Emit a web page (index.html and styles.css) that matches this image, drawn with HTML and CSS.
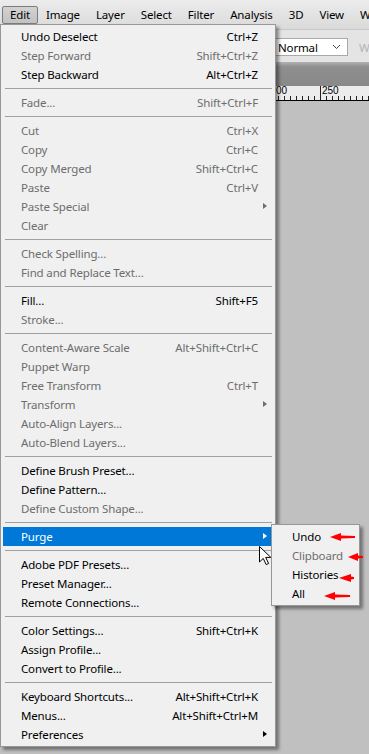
FILE: index.html
```html
<!DOCTYPE html>
<html lang="en">
<head>
    <meta charset="UTF-8">
    <meta name="viewport" content="width=device-width, initial-scale=1.0">
    <title>Edit menu</title>
    <link rel="stylesheet" href="styles.css">
</head>
<body>
    <div class="menubar">
        <span class="bar-item open">Edit</span>
        <span class="bar-item">Image</span>
        <span class="bar-item">Layer</span>
        <span class="bar-item">Select</span>
        <span class="bar-item">Filter</span>
        <span class="bar-item">Analysis</span>
        <span class="bar-item">3D</span>
        <span class="bar-item">View</span>
        <span class="bar-item">Window</span>
    </div>

    <div class="workspace">
        <div class="options-bar">
            <div class="select-box">
                <span>Normal</span>
                <svg width="9" height="6" viewBox="0 0 9 6"><path d="M1 1 L4.5 4.5 L8 1" fill="none" stroke="#444" stroke-width="1"/></svg>
            </div>
            <span class="faded">Width:</span>
        </div>
        <div class="tab-band"></div>
        <div class="ruler">
            <span class="ruler-num first">00</span>
            <span class="ruler-num major">250</span>
        </div>
        <div class="canvas"></div>
    </div>

    <!-- Edit dropdown -->
    <div class="menu">
        <div class="item"><span>Undo Deselect</span><span class="key">Ctrl+Z</span></div>
        <div class="item off"><span>Step Forward</span><span class="key">Shift+Ctrl+Z</span></div>
        <div class="item"><span>Step Backward</span><span class="key">Alt+Ctrl+Z</span></div>
        <div class="sep"></div>
        <div class="item off"><span>Fade...</span><span class="key">Shift+Ctrl+F</span></div>
        <div class="sep"></div>
        <div class="item off"><span>Cut</span><span class="key">Ctrl+X</span></div>
        <div class="item off"><span>Copy</span><span class="key">Ctrl+C</span></div>
        <div class="item off"><span>Copy Merged</span><span class="key">Shift+Ctrl+C</span></div>
        <div class="item off"><span>Paste</span><span class="key">Ctrl+V</span></div>
        <div class="item off sub"><span>Paste Special</span><span class="key"></span></div>
        <div class="item off"><span>Clear</span><span class="key"></span></div>
        <div class="sep"></div>
        <div class="item off"><span>Check Spelling...</span><span class="key"></span></div>
        <div class="item off"><span>Find and Replace Text...</span><span class="key"></span></div>
        <div class="sep"></div>
        <div class="item"><span>Fill...</span><span class="key">Shift+F5</span></div>
        <div class="item off"><span>Stroke...</span><span class="key"></span></div>
        <div class="sep"></div>
        <div class="item off"><span>Content-Aware Scale</span><span class="key">Alt+Shift+Ctrl+C</span></div>
        <div class="item off"><span>Puppet Warp</span><span class="key"></span></div>
        <div class="item off"><span>Free Transform</span><span class="key">Ctrl+T</span></div>
        <div class="item off sub"><span>Transform</span><span class="key"></span></div>
        <div class="item off"><span>Auto-Align Layers...</span><span class="key"></span></div>
        <div class="item off"><span>Auto-Blend Layers...</span><span class="key"></span></div>
        <div class="sep"></div>
        <div class="item"><span>Define Brush Preset...</span><span class="key"></span></div>
        <div class="item"><span>Define Pattern...</span><span class="key"></span></div>
        <div class="item off"><span>Define Custom Shape...</span><span class="key"></span></div>
        <div class="sep"></div>
        <div class="item sub active"><span>Purge</span><span class="key"></span></div>
        <div class="sep"></div>
        <div class="item"><span>Adobe PDF Presets...</span><span class="key"></span></div>
        <div class="item"><span>Preset Manager...</span><span class="key"></span></div>
        <div class="item"><span>Remote Connections...</span><span class="key"></span></div>
        <div class="sep"></div>
        <div class="item"><span>Color Settings...</span><span class="key">Shift+Ctrl+K</span></div>
        <div class="item"><span>Assign Profile...</span><span class="key"></span></div>
        <div class="item"><span>Convert to Profile...</span><span class="key"></span></div>
        <div class="sep"></div>
        <div class="item"><span>Keyboard Shortcuts...</span><span class="key">Alt+Shift+Ctrl+K</span></div>
        <div class="item"><span>Menus...</span><span class="key">Alt+Shift+Ctrl+M</span></div>
        <div class="item sub"><span>Preferences</span><span class="key"></span></div>
    </div>

    <!-- Purge submenu -->
    <div class="submenu">
        <div class="item">Undo</div>
        <div class="item off">Clipboard</div>
        <div class="item">Histories</div>
        <div class="item">All</div>
    </div>

    <!-- red annotation arrows and mouse pointer -->
    <svg class="overlay" width="369" height="754" viewBox="0 0 369 754">
        <g fill="#f00">
            <path d="M330 537 L341 533 L341 535.5 L355 536 L355 538 L341 538.5 L341 541 Z"/>
            <path d="M348 557 L358 553 L358 555.5 L363 556 L363 558 L358 558.5 L358 561 Z"/>
            <path d="M339 578 L351 574 L351 576.5 L354 577 L354 579 L351 579.5 L351 582 Z"/>
            <path d="M324 596 L335 592 L335 594.5 L350 595 L350 597 L335 597.5 L335 600 Z"/>
        </g>
        <path d="M259.5 546.5 L259.5 562 L263.2 558.4 L266.2 564.6 L268.6 563.5 L265.7 557.4 L270.8 557.4 Z" fill="#fff" stroke="#000" stroke-width="1"/>
    </svg>
</body>
</html>
```

FILE: styles.css
```css
body {
    margin: 0;
    width: 369px;
    height: 754px;
    overflow: hidden;
    font-family: 'Noto Sans', 'Liberation Sans', sans-serif;
    font-size: 11.5px;
    letter-spacing: -0.15px;
    color: #000;
    background-color: #c0c0c0;
    display: flex;
    flex-direction: column;
}

/* top menu bar */
.menubar {
    height: 30px;
    box-sizing: border-box;
    padding: 6px 0 0 2px;
    display: flex;
    white-space: nowrap;
    overflow: hidden;
    background: linear-gradient(#ececec, #dadada);
    border-bottom: 1px solid #c8c8c8;
}

.bar-item {
    height: 18px;
    line-height: 16px;
    padding: 0 7px;
    box-sizing: border-box;
    border: 1px solid transparent;
    flex-shrink: 0;
}

.bar-item.open {
    background: linear-gradient(#d2d2d2, #c2c2c2);
    border-color: #7c7c7c;
    border-radius: 2px;
}

/* photoshop workspace behind the menu */
.workspace {
    flex: 1;
    display: flex;
    flex-direction: column;
}

.options-bar {
    height: 32px;
    display: flex;
    align-items: center;
    gap: 11px;
    padding-left: 273px;
    background-color: #e4e4e4;
    white-space: nowrap;
    overflow: hidden;
}

.select-box {
    width: 75px;
    height: 18px;
    flex-shrink: 0;
    box-sizing: border-box;
    margin-top: 2px;
    padding: 0 6px 0 4px;
    display: flex;
    align-items: center;
    justify-content: space-between;
    background-color: #fff;
    border: 1px solid #a9a9a9;
}

.faded {
    color: #b4b4b4;
    margin-top: 2px;
}

.tab-band {
    height: 24px;
    background: linear-gradient(#b2b2b2, #8e8e8e 20%, #898989);
}

.ruler {
    height: 14px;
    position: relative;
    display: flex;
    align-items: flex-start;
    padding-left: 276px;
    font-family: 'Liberation Sans', sans-serif;
    font-size: 10px;
    line-height: 10px;
    letter-spacing: 0;
    background-color: #ececec;
    background-image: repeating-linear-gradient(90deg, #222 0 1px, transparent 1px 6px);
    background-size: 100% 4px;
    background-repeat: no-repeat;
    background-position: 2px 100%;
    border-bottom: 1px solid #000;
}

.ruler-num.first {
    width: 44px;
}

.ruler-num.major {
    border-left: 1px solid #222;
    height: 14px;
    padding-left: 1px;
}

.canvas {
    flex: 1;
    background-color: #c0c0c0;
}

/* dropdown menus */
.menu,
.submenu {
    position: absolute;
    box-sizing: border-box;
    padding: 2px;
    background-color: #f0f0f0;
    border: 1px solid #979797;
    box-shadow: 3px 3px 3px rgba(0, 0, 0, 0.4);
}

.menu {
    left: 0;
    top: 24px;
    width: 276px;
}

.submenu {
    left: 271px;
    top: 524px;
    width: 89px;
}

.item {
    height: 19px;
    display: flex;
    align-items: center;
    padding: 0 15px 0 18px;
    position: relative;
    white-space: nowrap;
}

.menu .item {
    justify-content: space-between;
}

.item.off {
    color: #6d6d6d;
}

.item.sub::after {
    content: "";
    position: absolute;
    right: 6px;
    top: 6px;
    border-left: 4px solid #000;
    border-top: 3.5px solid transparent;
    border-bottom: 3.5px solid transparent;
}

.item.off.sub::after {
    border-left-color: #6d6d6d;
}

.item.active {
    background-color: #0078d7;
    color: #fff;
}

.item.active::after {
    border-left-color: #fff;
}

.sep {
    height: 1px;
    margin: 4px 1px 4px 2px;
    background-color: #a0a0a0;
}

.overlay {
    position: absolute;
    left: 0;
    top: 0;
    pointer-events: none;
}
```
